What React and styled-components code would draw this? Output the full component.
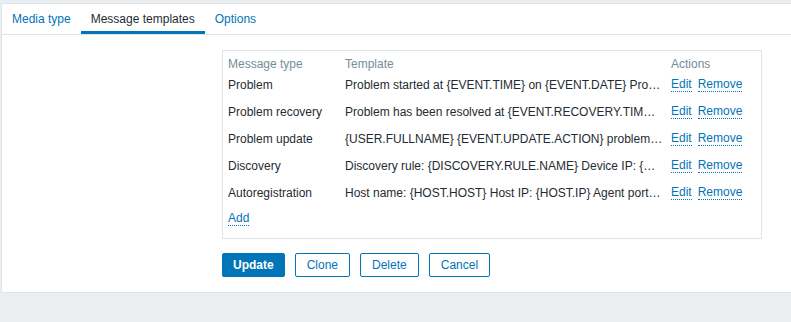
import React from 'react';
import styled, { createGlobalStyle } from 'styled-components';

const colors = {
    page: '#ebeef0',
    border: '#dfe4e7',
    blue: '#0275b8',
    text: '#1f2c33',
    muted: '#768d99',
};

const GlobalStyle = createGlobalStyle`
    html, body {
        margin: 0;
        background: ${colors.page};
    }
    body {
        font-family: "Liberation Sans", Arial, sans-serif;
        font-size: 12px;
        color: ${colors.text};
    }
`;

const Page = styled.div`
    padding: 3px 0 0 1px;
    height: 319px;
    box-sizing: border-box;
`;

const Panel = styled.div`
    background: #ffffff;
    border: 1px solid ${colors.border};
    border-right: none;
`;

const TabBar = styled.div`
    display: flex;
    height: 30px;
    border-bottom: 1px solid ${colors.border};
`;

const Tab = styled.div`
    box-sizing: border-box;
    height: 30px;
    padding: 0 10px;
    line-height: 30px;
    color: ${p => (p.$active ? colors.text : colors.blue)};
    border-bottom: 3px solid ${p => (p.$active ? colors.blue : 'transparent')};
`;

const Form = styled.div`
    display: grid;
    grid-template-columns: 210px 540px;
    column-gap: 10px;
    row-gap: 14px;
    padding: 15px 0 15px;
`;

const TableBox = styled.div`
    grid-column: 2;
    border: 1px solid ${colors.border};
    padding: 4px 5px 5px;
`;

const Row = styled.div`
    display: grid;
    grid-template-columns: 117px 326px 1fr;
    height: ${p => (p.$head ? 17 : 26.8)}px;
    align-items: center;
    color: ${p => (p.$head ? colors.muted : colors.text)};
`;

const Cell = styled.div`
    white-space: nowrap;
    overflow: hidden;
    text-overflow: ellipsis;
    padding-right: ${p => p.$pad || 0}px;
`;

const Actions = styled.div`
    display: flex;
    gap: 6px;
`;

const LinkBtn = styled.span`
    color: ${colors.blue};
    border-bottom: 1px dotted ${colors.blue};
    line-height: 13px;
    cursor: pointer;
`;

const Buttons = styled.div`
    grid-column: 2;
    display: flex;
    gap: 10px;
`;

const Button = styled.button`
    height: 24px;
    padding: 0 ${p => p.$px || 11}px;
    font-family: inherit;
    font-size: 12px;
    border-radius: 2px;
    border: 1px solid ${colors.blue};
    background: ${p => (p.$primary ? colors.blue : '#ffffff')};
    color: ${p => (p.$primary ? '#ffffff' : colors.blue)};
    font-weight: ${p => (p.$primary ? 'bold' : 'normal')};
`;

const templates = [
    ['Problem', 'Problem started at {EVENT.TIME} on {EVENT.DATE} Problem name: {EVENT.NAME} Host: {HOST.NAME}'],
    ['Problem recovery', 'Problem has been resolved at {EVENT.RECOVERY.TIME} on {EVENT.RECOVERY.DATE}'],
    ['Problem update', '{USER.FULLNAME} {EVENT.UPDATE.ACTION} problem at {EVENT.UPDATE.DATE}'],
    ['Discovery', 'Discovery rule: {DISCOVERY.RULE.NAME} Device IP: {DISCOVERY.DEVICE.IPADDRESS}'],
    ['Autoregistration', 'Host name: {HOST.HOST} Host IP: {HOST.IP} Agent port: {HOST.PORT}'],
];

const App = () => (
    <Page>
        <GlobalStyle />
        <Panel>
            <TabBar>
                <Tab>Media type</Tab>
                <Tab $active>Message templates</Tab>
                <Tab>Options</Tab>
            </TabBar>
            <Form>
                <TableBox>
                    <Row $head>
                        <Cell>Message type</Cell>
                        <Cell>Template</Cell>
                        <Cell>Actions</Cell>
                    </Row>
                    {templates.map(([type, text]) => (
                        <Row key={type}>
                            <Cell>{type}</Cell>
                            <Cell $pad={8}>{text}</Cell>
                            <Actions>
                                <LinkBtn>Edit</LinkBtn>
                                <LinkBtn>Remove</LinkBtn>
                            </Actions>
                        </Row>
                    ))}
                    <Row>
                        <Actions>
                            <LinkBtn>Add</LinkBtn>
                        </Actions>
                    </Row>
                </TableBox>
                <Buttons>
                    <Button $primary $px={10}>Update</Button>
                    <Button>Clone</Button>
                    <Button>Delete</Button>
                    <Button>Cancel</Button>
                </Buttons>
            </Form>
        </Panel>
    </Page>
);

export default App;
